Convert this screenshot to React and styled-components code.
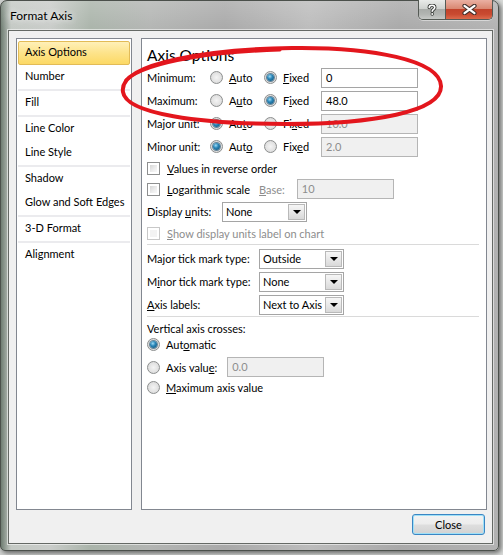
import { createGlobalStyle, styled } from "styled-components";

const GlobalStyle = createGlobalStyle`
  html, body {
    margin: 0;
    padding: 0;
  }
  body {
    background: #d3d5d3;
    font-family: Lato, "Noto Sans", "DejaVu Sans", sans-serif;
    font-size: 11px;
    color: #000;
  }
`;

const Stage = styled.div`
  position: relative;
  width: 503px;
  height: 555px;
  overflow: hidden;
  background: linear-gradient(90deg, #cfd1cf 0%, #d9dbd9 100%);
`;

const Window = styled.div`
  box-sizing: border-box;
  width: 499px;
  height: 551px;
  display: flex;
  flex-direction: column;
  border: 1px solid #4b504b;
  border-radius: 7px 7px 5px 5px;
  background:
    linear-gradient(180deg, rgba(255, 255, 255, 0.18) 0%, rgba(255, 255, 255, 0) 30px),
    linear-gradient(90deg, #6f7d72 0%, #c4c9c4 2%, #c9ccc9 10%, #aab4aa 18%, #b3b5b3 30%, #a9a9a9 45%, #bcbcbc 62%, #a9a9a9 80%, #b2b2b2 100%);
  box-shadow: 2px 2px 5px rgba(0, 0, 0, 0.55);
`;

const TitleBar = styled.div`
  height: 29px;
  display: flex;
  align-items: center;
  padding-left: 9px;
`;

const Title = styled.span`
  font-size: 12px;
  color: #000;
  text-shadow: 0 0 6px rgba(255, 255, 255, 0.9), 0 0 10px rgba(255, 255, 255, 0.6);
`;

const CaptionGroup = styled.div`
  margin-left: auto;
  margin-right: 5px;
  margin-top: -1px;
  align-self: flex-start;
  display: flex;
  border: 1px solid #555a55;
  border-top: none;
  border-radius: 0 0 5px 5px;
  overflow: hidden;
  box-shadow: 0 1px 0 rgba(255, 255, 255, 0.45);
`;

const CaptionButton = styled.div`
  width: ${({ $w }) => $w}px;
  height: 19px;
  display: flex;
  align-items: center;
  justify-content: center;
  background: ${({ $close }) =>
    $close
      ? "linear-gradient(180deg, #eab0a2 0%, #d98872 45%, #c2432b 50%, #c94a30 75%, #dc6a4c 100%)"
      : "linear-gradient(180deg, #e9ebe9 0%, #cfd2cf 45%, #a9aca9 50%, #b2b5b2 75%, #c7c9c7 100%)"};
  & + & {
    border-left: 1px solid #555a55;
  }
`;

const Client = styled.div`
  flex: 1;
  margin: 0 5px 6px 7px;
  display: flex;
  flex-direction: column;
  padding: 7px 5px 8px 7px;
  border: 1px solid #656965;
  background: #f0f0f0;
  box-shadow: 0 0 0 1px rgba(255, 255, 255, 0.55);
`;

const Panels = styled.div`
  height: 472px;
  display: flex;
  gap: 9px;
`;

const NavPanel = styled.div`
  box-sizing: border-box;
  width: 116px;
  border: 1px solid #828790;
  background: #fff;
  padding: 1px 1px;
  display: flex;
  flex-direction: column;
`;

const NavItem = styled.div`
  height: 24px;
  box-sizing: border-box;
  display: flex;
  align-items: center;
  white-space: nowrap;
  padding: 0 0 3px 6px;
  border: 1px solid ${({ $active }) => ($active ? "#e2bb57" : "transparent")};
  border-radius: 2px;
  background: ${({ $active }) =>
    $active ? "linear-gradient(180deg, #fff0b8 0%, #fde38a 50%, #fcd965 100%)" : "transparent"};
  margin-top: ${({ $first }) => ($first ? "1px" : "0")};
`;

const NavSep = styled.div`
  height: 2px;
  background: #ebebee;
`;

const OptionsPanel = styled.div`
  flex: 1;
  border: 1px solid #828790;
  background: #fff;
  padding: 0 7px 0 5px;
  display: flex;
  flex-direction: column;
`;

const Heading = styled.div`
  padding-top: 6px;
  height: 21px;
  line-height: 21px;
  font-size: 15.5px;
`;

const Row = styled.div`
  height: ${({ $h }) => $h}px;
  margin-top: ${({ $mt }) => $mt || 0}px;
  display: flex;
  align-items: center;
  white-space: nowrap;
  color: ${({ $dim }) => ($dim ? "#8d8d8d" : "#000")};
`;

const Label = styled.span`
  width: ${({ $w }) => ($w ? `${$w}px` : "auto")};
  margin-left: ${({ $ml }) => $ml || 0}px;
  color: ${({ $dim }) => ($dim ? "#8d8d8d" : "inherit")};
  flex-shrink: 0;
`;

const Option = styled.span`
  width: ${({ $w }) => ($w ? `${$w}px` : "auto")};
  display: flex;
  align-items: center;
  gap: 6px;
  flex-shrink: 0;
`;

const Radio = styled.span`
  box-sizing: border-box;
  width: 13px;
  height: 13px;
  border-radius: 50%;
  border: 1px solid #8c8e8e;
  background: radial-gradient(circle at 50% 50%, #f4f4f4 0%, #e3e3e3 55%, #d2d2d2 100%);
  display: flex;
  align-items: center;
  justify-content: center;
  flex-shrink: 0;
  &::after {
    content: "";
    width: 7px;
    height: 7px;
    border-radius: 50%;
    display: ${({ $on }) => ($on ? "block" : "none")};
    background: radial-gradient(circle at 40% 35%, #9fdcf5 0%, #2b86b8 40%, #0b4a6e 100%);
    box-shadow: 0 0 0 1px rgba(22, 70, 100, 0.6);
  }
`;

const Check = styled.span`
  box-sizing: border-box;
  width: 13px;
  height: 13px;
  border: 1px solid ${({ $off }) => ($off ? "#c8c8c8" : "#8e8f8f")};
  background: #fff;
  padding: 2px;
  flex-shrink: 0;
  &::after {
    content: "";
    display: block;
    width: 100%;
    height: 100%;
    background: ${({ $off }) =>
      $off ? "#f3f3f3" : "linear-gradient(135deg, #d6d6d6 0%, #eeeeee 60%, #f9f9f9 100%)"};
  }
`;

const CheckOption = styled.span`
  display: flex;
  align-items: center;
  gap: 7px;
`;

const TextBox = styled.div`
  box-sizing: border-box;
  width: 97px;
  height: 20px;
  margin-left: ${({ $ml }) => $ml || 0}px;
  border: 1px solid ${({ $off }) => ($off ? "#b5b5b5" : "#a5a5a5")};
  background: ${({ $off }) => ($off ? "#f0f0f0" : "#fff")};
  color: ${({ $off }) => ($off ? "#8d8d8d" : "#000")};
  padding-left: 4px;
  line-height: 18px;
`;

const Combo = styled.div`
  box-sizing: border-box;
  width: 85px;
  height: 20px;
  border: 1px solid #a5a5a5;
  background: #fff;
  display: flex;
  align-items: stretch;
`;

const ComboText = styled.span`
  flex: 1;
  padding-left: 3px;
  line-height: 18px;
  overflow: hidden;
`;

const ComboButton = styled.span`
  box-sizing: border-box;
  width: 17px;
  margin: 1px;
  border: 1px solid #b9b9b9;
  background: linear-gradient(180deg, #f6f6f6 0%, #e8e8e8 50%, #d9d9d9 100%);
  display: flex;
  align-items: center;
  justify-content: center;
  &::after {
    content: "";
    border-left: 4px solid transparent;
    border-right: 4px solid transparent;
    border-top: 4px solid #000;
    margin-top: 1px;
  }
`;

const Divider = styled.div`
  height: 1px;
  background: #dadada;
  margin: ${({ $m }) => $m};
`;

const Footer = styled.div`
  margin-top: 4px;
  display: flex;
  justify-content: flex-end;
  padding-right: 2px;
`;

const Button = styled.div`
  box-sizing: border-box;
  width: 73px;
  height: 21px;
  border: 1px solid #3a86c4;
  border-radius: 3px;
  background: linear-gradient(180deg, #f3f3f3 0%, #ececec 48%, #dedede 52%, #d2d2d2 100%);
  box-shadow: inset 0 0 0 1px #9fe0f7;
  display: flex;
  align-items: center;
  justify-content: center;
`;

const Key = styled.span`
  text-decoration: underline;
  text-underline-offset: 1px;
`;

const Overlay = styled.svg`
  position: absolute;
  left: 0;
  top: 0;
  pointer-events: none;
`;

const withKey = (text, i) =>
  i === undefined ? (
    text
  ) : (
    <>
      {text.slice(0, i)}
      <Key>{text[i]}</Key>
      {text.slice(i + 1)}
    </>
  );

const navGroups = [
  ["Axis Options", "Number"],
  ["Fill"],
  ["Line Color", "Line Style"],
  ["Shadow", "Glow and Soft Edges"],
  ["3-D Format"],
  ["Alignment"],
];

const bounds = [
  { label: "Minimum:", key: 0, fixed: true, value: "0" },
  { label: "Maximum:", key: 1, fixed: true, value: "48.0" },
  { label: "Major unit:", key: 2, fixed: false, value: "10.0" },
  { label: "Minor unit:", key: 3, fixed: false, value: "2.0" },
];

const ticks = [
  { label: "Major tick mark type:", value: "Outside" },
  { label: "Minor tick mark type:", key: 1, value: "None" },
  { label: "Axis labels:", key: 0, value: "Next to Axis" },
];

const HelpGlyph = () => (
  <svg width="10" height="12" viewBox="0 0 10 12">
    <path
      d="M2.2 3.6 C2.2 1.8 3.4 1.2 5 1.2 C6.8 1.2 7.8 2.2 7.8 3.5 C7.8 5.2 5.2 5.4 5.2 7.2"
      fill="none"
      stroke="#3a3d3a"
      strokeWidth="3.4"
      strokeLinecap="round"
    />
    <path
      d="M2.2 3.6 C2.2 1.8 3.4 1.2 5 1.2 C6.8 1.2 7.8 2.2 7.8 3.5 C7.8 5.2 5.2 5.4 5.2 7.2"
      fill="none"
      stroke="#fff"
      strokeWidth="1.6"
      strokeLinecap="round"
    />
    <circle cx="5.2" cy="10" r="1.7" fill="#3a3d3a" />
    <circle cx="5.2" cy="10" r="0.9" fill="#fff" />
  </svg>
);

const CloseGlyph = () => (
  <svg width="15" height="11" viewBox="0 0 15 11">
    <path d="M2.5 1.8 L12.5 9.2 M12.5 1.8 L2.5 9.2" stroke="#43302c" strokeWidth="4.2" strokeLinecap="round" />
    <path d="M2.5 1.8 L12.5 9.2 M12.5 1.8 L2.5 9.2" stroke="#fff" strokeWidth="2.2" strokeLinecap="round" />
  </svg>
);

export default function App() {
  return (
    <>
      <GlobalStyle />
      <Stage>
        <Window>
          <TitleBar>
            <Title>Format Axis</Title>
            <CaptionGroup>
              <CaptionButton $w={26}>
                <HelpGlyph />
              </CaptionButton>
              <CaptionButton $w={46} $close>
                <CloseGlyph />
              </CaptionButton>
            </CaptionGroup>
          </TitleBar>
          <Client>
            <Panels>
              <NavPanel>
                {navGroups.map((group, gi) => (
                  <div key={gi}>
                    {gi > 0 && <NavSep />}
                    {group.map((item) => (
                      <NavItem key={item} $active={item === "Axis Options"} $first={gi === 0 && item === "Axis Options"}>
                        {item}
                      </NavItem>
                    ))}
                  </div>
                ))}
              </NavPanel>

              <OptionsPanel>
                <Heading>Axis Options</Heading>
                {bounds.map((b) => (
                  <Row key={b.label} $h={23}>
                    <Label $w={63}>{b.label}</Label>
                    <Option $w={54}>
                      <Radio $on={!b.fixed} />
                      <span>{withKey("Auto", b.key)}</span>
                    </Option>
                    <Option $w={57}>
                      <Radio $on={b.fixed} />
                      <span>{withKey("Fixed", b.key)}</span>
                    </Option>
                    <TextBox $off={!b.fixed}>{b.value}</TextBox>
                  </Row>
                ))}

                <Row $h={20}>
                  <CheckOption>
                    <Check />
                    <span>{withKey("Values in reverse order", 0)}</span>
                  </CheckOption>
                </Row>
                <Row $h={22}>
                  <CheckOption>
                    <Check />
                    <span>{withKey("Logarithmic scale", 0)}</span>
                  </CheckOption>
                  <Label $ml={9} $dim>
                    {withKey("Base:", 0)}
                  </Label>
                  <TextBox $off $ml={12}>
                    10
                  </TextBox>
                </Row>
                <Row $h={23}>
                  <Label $w={75}>{withKey("Display units:", 8)}</Label>
                  <Combo>
                    <ComboText>None</ComboText>
                    <ComboButton />
                  </Combo>
                </Row>
                <Row $h={20} $dim>
                  <CheckOption>
                    <Check $off />
                    <span>{withKey("Show display units label on chart", 0)}</span>
                  </CheckOption>
                </Row>

                <Divider $m="1px 0 2px" />

                {ticks.map((t) => (
                  <Row key={t.label} $h={23}>
                    <Label $w={112}>{withKey(t.label, t.key)}</Label>
                    <Combo>
                      <ComboText>{t.value}</ComboText>
                      <ComboButton />
                    </Combo>
                  </Row>
                ))}

                <Divider $m="0 0 1px" />

                <Row $h={18} $mt={1}>
                  Vertical axis crosses:
                </Row>
                <Row $h={15}>
                  <Option>
                    <Radio $on />
                    <span>{withKey("Automatic", 3)}</span>
                  </Option>
                </Row>
                <Row $h={22} $mt={4}>
                  <Option>
                    <Radio />
                    <span>{withKey("Axis value:", 9)}</span>
                  </Option>
                  <TextBox $off $ml={10}>
                    0.0
                  </TextBox>
                </Row>
                <Row $h={18}>
                  <Option>
                    <Radio />
                    <span>{withKey("Maximum axis value", 0)}</span>
                  </Option>
                </Row>
              </OptionsPanel>
            </Panels>
            <Footer>
              <Button>Close</Button>
            </Footer>
          </Client>
        </Window>

        <Overlay width="503" height="555" viewBox="0 0 503 555">
          <path
            d="M123 92 C118 62 215 49 292 48 C372 47 440 60 441 86 C442 112 372 124 286 124 C200 124 126 114 123 92 Z"
            fill="none"
            stroke="#e3161d"
            strokeWidth="4"
          />
          <path
            d="M126 80 C150 60 220 52 280 50"
            fill="none"
            stroke="#e3161d"
            strokeWidth="3"
            strokeLinecap="round"
          />
        </Overlay>
      </Stage>
    </>
  );
}
